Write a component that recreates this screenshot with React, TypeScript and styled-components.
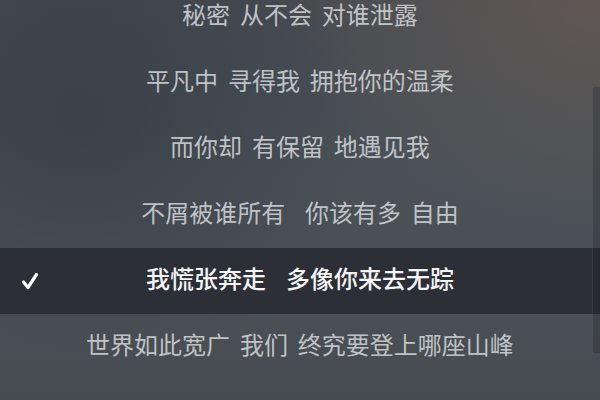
import React from "react";
import styled, { createGlobalStyle } from "styled-components";

const Global = createGlobalStyle`
  html, body { margin: 0; padding: 0; }
  body {
    width: 600px;
    height: 400px;
    overflow: hidden;
    font-family: "Noto Sans CJK SC", "Noto Sans", sans-serif;
  }
`;

const Screen = styled.div`
  position: relative;
  width: 600px;
  height: 400px;
  overflow: hidden;
  background:
    radial-gradient(ellipse 340px 260px at 610px -20px, rgba(120, 100, 88, 0.55), rgba(120, 100, 88, 0) 100%),
    radial-gradient(ellipse 300px 240px at 80px 120px, rgba(40, 48, 58, 0.45), rgba(40, 48, 58, 0) 100%),
    linear-gradient(180deg, #464b51 0%, #4a5157 45%, #4a5055 75%, #474c51 100%);
`;

const Lines = styled.ul`
  list-style: none;
  margin: -16px 0 0;
  padding: 0;
  display: flex;
  flex-direction: column;
`;

const Line = styled.li<{ $current?: boolean }>`
  position: relative;
  height: 66px;
  display: flex;
  align-items: center;
  justify-content: center;
  white-space: pre;
  font-size: 24px;
  line-height: 1;
  word-spacing: 4.5px;
  font-weight: ${(p) => (p.$current ? 500 : 400)};
  color: ${(p) => (p.$current ? "#f4f5f6" : "rgba(214, 217, 220, 0.86)")};
  background: ${(p) => (p.$current ? "#2c2f35" : "transparent")};
`;

const Text = styled.span`
  display: block;
  transform: translateY(-3px);
`;

const Check = styled.span`
  position: absolute;
  left: 19px;
  top: 50%;
  transform: translateY(-50%);
  width: 22px;
  height: 22px;
  display: flex;
`;

const EdgeTab = styled.div`
  position: absolute;
  right: 0;
  top: 87px;
  width: 7px;
  height: 266px;
  background: rgba(20, 22, 26, 0.22);
  border-left: 1px solid rgba(255, 255, 255, 0.08);
`;

const lyrics = [
  "秘密 从不会 对谁泄露",
  "平凡中 寻得我 拥抱你的温柔",
  "而你却 有保留 地遇见我",
  "不屑被谁所有  你该有多 自由",
  "我慌张奔走  多像你来去无踪",
  "世界如此宽广 我们 终究要登上哪座山峰",
];

const CURRENT = 4;

export default function App() {
  return (
    <>
      <Global />
      <Screen>
        <Lines>
          {lyrics.map((text, i) => (
            <Line key={i} $current={i === CURRENT}>
              {i === CURRENT && (
                <Check>
                  <svg viewBox="0 0 22 22" width="22" height="22">
                    <path
                      d="M4.5 12 L9 17.5 L17.5 4.5"
                      fill="none"
                      stroke="#ffffff"
                      strokeWidth="3.2"
                      strokeLinecap="round"
                      strokeLinejoin="round"
                    />
                  </svg>
                </Check>
              )}
              <Text>{text}</Text>
            </Line>
          ))}
        </Lines>
        <EdgeTab />
      </Screen>
    </>
  );
}
